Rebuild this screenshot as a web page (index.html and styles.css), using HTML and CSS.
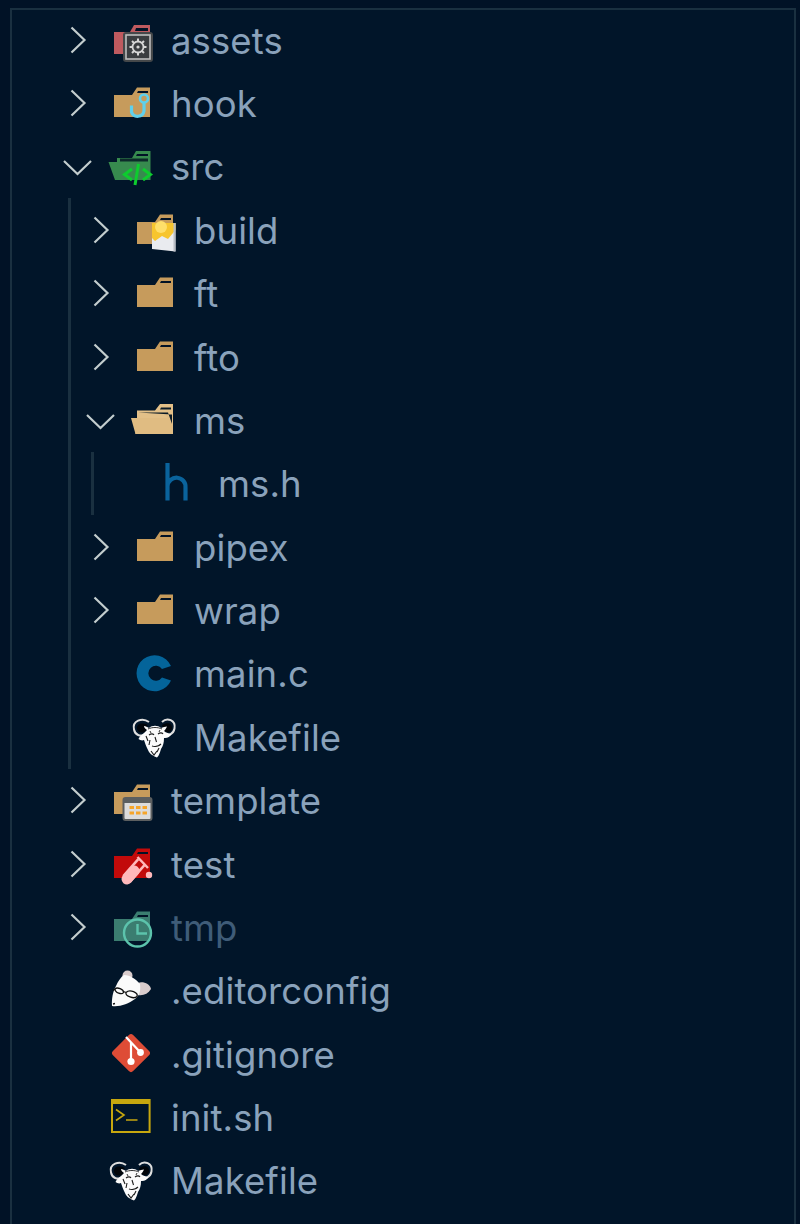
FILE: index.html
```html
<!DOCTYPE html>
<html lang="en">
<head>
<meta charset="utf-8">
<title>Explorer</title>
<link rel="stylesheet" href="styles.css">
</head>
<body>
<svg class="sprite" aria-hidden="true">
  <defs>
    <symbol id="right" viewBox="0 0 30 30"><path d="M8.5 2.5 L21.5 15 L8.5 27.5" class="chev"/></symbol>
    <symbol id="down" viewBox="0 0 30 30"><path d="M1 10 L14.5 23 L28 10" class="chev"/></symbol>
    <symbol id="gnu" viewBox="-6 -4 48 48" overflow="visible">
      <path d="M12 3C5-2-5 2-3 10.500C-2 16 3 18 9 15.500" fill="none" stroke="#dedede" stroke-width="2"/>
      <path d="M25 3C30-2 39 1 37.500 9.500C36.500 15 31 17.500 27 15.500" fill="none" stroke="#dedede" stroke-width="2"/>
      <path d="M10.500 6C5 3-1 5 0 10C1 14 5 14.500 9 12Z" fill="#01050a"/>
      <path d="M25 6C30 3 35.500 4 35 9.500C34 13.500 30 14 27 12Z" fill="#01050a"/>
      <path d="M10 11C8 10 7 8 7 7C9 7 10 8 12 9C15 6 21 6 24 9C26 8 28 8 30 7.500C29 10 28 11 27 12C29 14 32 14 34.500 15C33 18 30 19.500 27 19C27 24 26 27 24 30C23 33 22 37 20 38.500C17 37 13 36 11 31C9 27 8 24 7 21C5 22 3 21 1.500 20C3 16 7 15 10 11Z" fill="#fbfbfb"/>
      <path d="M12 16C14 14.500 16 14.500 17 16M21 15C23 13.500 25 13.500 26 15M15 27C18 28 22 27 24 25M18 18L19.500 23M13 21L12 26M9 17L11 22M14 32L17 36L20 32M22 29L20 33" fill="none" stroke="#1c1c1c" stroke-width="1.100"/>
      <path d="M11 10C15 8 21 8 25 10M13 12L14 14M23 11L22 13" fill="none" stroke="#333" stroke-width="1"/>
    </symbol>
  </defs>
</svg>

<main class="panel">
  <ul class="tree">
    <li class="row"><span class="twist"><svg class="chevron"><use href="#right"/></svg></span>
      <svg class="icon" viewBox="0 0 36 36"><path d="M0 10H13V32H0Z" fill="#bf5a5f"/><path d="M16 10L20 3H36V12H16Z" fill="#bf5a5f"/><path d="M22 6H34V9H21Z" fill="#011226"/>
        <rect x="9" y="10" width="30" height="30" rx="3" fill="#45484a"/><rect x="12" y="13" width="24" height="24" fill="#3a3d40" stroke="#bdbdbd" stroke-width="1.600"/>
        <circle cx="24" cy="25" r="5.500" fill="none" stroke="#d6d6d6" stroke-width="1.800"/><circle cx="24" cy="25" r="1.600" fill="#d6d6d6"/><path d="M24 16.500V19.500M24 30.500V33.500M15.500 25H18.500M29.500 25H32.500M18 19L20 21M28 29L30 31M30 19L28 21M20 29L18 31" stroke="#d6d6d6" stroke-width="2"/></svg>
      <span class="name">assets</span></li>
    <li class="row"><span class="twist"><svg class="chevron"><use href="#right"/></svg></span>
      <svg class="icon" viewBox="0 0 36 36"><path class="folder" d="M0 10H18L23 2.500H36V32H0Z"/><path d="M24 6H34V8H23Z" fill="#011226"/>
        <circle cx="30" cy="13.500" r="4" fill="none" stroke="#5fd0ec" stroke-width="2.600"/><path d="M30 17.500V26A6.500 6.500 0 0 1 17.500 27V20.500" fill="none" stroke="#5fd0ec" stroke-width="3.200"/></svg>
      <span class="name">hook</span></li>
    <li>
      <div class="row"><span class="twist"><svg class="chevron wide"><use href="#down"/></svg></span>
        <svg class="icon" viewBox="0 0 36 36"><path d="M3 14V10H18L22 3H36.500V32H1L-5.500 14Z" fill="#378a4e"/><path d="M23 6H34V8H22Z" fill="#011226"/><path d="M6 10.500H34V13.500H6Z" fill="#0d2a2a"/>
          <path d="M18 21L10.500 26.500L18 32M29 21L36.500 26.500L29 32M24.500 16L21 37" fill="none" stroke="#0dcc2e" stroke-width="3"/></svg>
        <span class="name">src</span></div>
      <ul class="group">
        <li class="row"><span class="twist"><svg class="chevron"><use href="#right"/></svg></span>
          <svg class="icon" viewBox="0 0 36 36"><path class="folder" d="M0 10H18L23 2.500H36V32H0Z"/><path d="M24 6H34V8H23Z" fill="#011226"/>
            <path d="M15 11H38.500V39.500L15 37Z" fill="#e9ebef"/><path d="M15 11H38.500V18L31 27L25 24L18 29L15 26Z" fill="#f7c52e"/><circle cx="24" cy="15" r="6" fill="#ffdf6a"/><path d="M36.500 11H38.500V39.500H36.500Z" fill="#b9bdc4"/></svg>
          <span class="name">build</span></li>
        <li class="row"><span class="twist"><svg class="chevron"><use href="#right"/></svg></span>
          <svg class="icon" viewBox="0 0 36 36"><path class="folder" d="M0 10H18L23 2.500H36V32H0Z"/><path d="M24 6H34V8H23Z" fill="#011226"/></svg>
          <span class="name">ft</span></li>
        <li class="row"><span class="twist"><svg class="chevron"><use href="#right"/></svg></span>
          <svg class="icon" viewBox="0 0 36 36"><path class="folder" d="M0 10H18L23 2.500H36V32H0Z"/><path d="M24 6H34V8H23Z" fill="#011226"/></svg>
          <span class="name">fto</span></li>
        <li>
          <div class="row"><span class="twist"><svg class="chevron wide"><use href="#down"/></svg></span>
            <svg class="icon" viewBox="0 0 36 36"><path fill="#e3c088" d="M0 16V8.500H18L23 2H36V32H-1.500Z"/><path d="M24 5.500H34V7.500H23ZM1 10.500H31L35 22V12.500Z" fill="#0a1a26"/><path d="M-6 16H31L28.500 13H31L35.500 25V32H-1.500Z" fill="#e0bc82"/></svg>
            <span class="name">ms</span></div>
          <ul class="group inner">
            <li class="row"><span class="twist"></span>
              <svg class="icon" viewBox="0 0 36 36"><path d="M6.500-2V35.500M6.500 21A9 9 0 0 1 24.500 22.500V35.500" fill="none" stroke="#0a639c" stroke-width="4.200"/></svg>
              <span class="name">ms.h</span></li>
          </ul>
        </li>
        <li class="row"><span class="twist"><svg class="chevron"><use href="#right"/></svg></span>
          <svg class="icon" viewBox="0 0 36 36"><path class="folder" d="M0 10H18L23 2.500H36V32H0Z"/><path d="M24 6H34V8H23Z" fill="#011226"/></svg>
          <span class="name">pipex</span></li>
        <li class="row"><span class="twist"><svg class="chevron"><use href="#right"/></svg></span>
          <svg class="icon" viewBox="0 0 36 36"><path class="folder" d="M0 10H18L23 2.500H36V32H0Z"/><path d="M24 6H34V8H23Z" fill="#011226"/></svg>
          <span class="name">wrap</span></li>
        <li class="row"><span class="twist"></span>
          <svg class="icon" viewBox="0 0 36 36"><path d="M34 11A18 18 0 1 0 34 25.500L25 22.500A7.500 7.500 0 1 1 25 14Z" fill="#04649a"/></svg>
          <span class="name">main.c</span></li>
        <li class="row"><span class="twist"></span>
          <svg class="icon"><use href="#gnu" x="-6" y="-4" width="48" height="48"/></svg>
          <span class="name">Makefile</span></li>
      </ul>
    </li>
    <li class="row"><span class="twist"><svg class="chevron"><use href="#right"/></svg></span>
      <svg class="icon" viewBox="0 0 36 36"><path class="folder" d="M0 10H18L23 2.500H36V32H0Z"/><path d="M24 6H34V8H23Z" fill="#011226"/>
        <rect x="9.500" y="16" width="28" height="22" rx="2" fill="#dcdcdc" stroke="#5c5f60" stroke-width="2"/><path d="M9 16H38V21H9Z" fill="#5c5f60"/>
        <path d="M15.500 24H20V27H15.500ZM22 24H26.500V27H22ZM28.500 24H33V27H28.500ZM15.500 29.500H20V32.500H15.500ZM22 29.500H26.500V32.500H22ZM28.500 29.500H33V32.500H28.500Z" fill="#f6a52a"/></svg>
      <span class="name">template</span></li>
    <li class="row"><span class="twist"><svg class="chevron"><use href="#right"/></svg></span>
      <svg class="icon" viewBox="0 0 36 36"><path d="M0 10H18L23 2.500H36V32H0Z" fill="#c20a0a"/><path d="M24 6H34V8H23Z" fill="#011226"/>
        <path d="M12.500 33L27.500 16" stroke="#ffb9bb" stroke-width="11"/><path d="M20 24.500L27.500 16" stroke="#c20a0a" stroke-width="6"/><path d="M13 33L20 25" stroke="#ffb9bb" stroke-width="11" stroke-linecap="round"/><path d="M23.500 11L34 22" stroke="#ffb9bb" stroke-width="2.500"/><circle cx="35" cy="29" r="3.200" fill="#ffb9bb"/></svg>
      <span class="name">test</span></li>
    <li class="row"><span class="twist"><svg class="chevron"><use href="#right"/></svg></span>
      <svg class="icon" viewBox="0 0 36 36"><path d="M0 10H18L23 2.500H36V32H0Z" fill="#3b7d70"/><path d="M24 6H34V8H23Z" fill="#011226"/>
        <circle cx="23.500" cy="24" r="13.500" fill="none" stroke="#5cc3ac" stroke-width="2.400"/><path d="M23.500 15V24.500H33" fill="none" stroke="#5cc3ac" stroke-width="2.400"/></svg>
      <span class="name dim">tmp</span></li>
    <li class="row"><span class="twist"></span>
      <svg class="icon" viewBox="0 0 36 36"><ellipse cx="13.500" cy="3.500" rx="5" ry="5" fill="#d9cccc"/><path d="M24 11C29 9 36 12 37 17C34 22 29 24 24 23Z" fill="#d9cccc"/>
        <path d="M-2 34C-2.500 27-1 19 2 14C4 9 7 5 10 3C16 3 22 7 26 12C27 20 25 24 21 27C14 32 6 35-2 34Z" fill="#fafafa"/>
        <path d="M-1 18.500L1 17M12 20.500C11 24 20 27.500 23 24.500C24.500 21 16 16.500 12 20.500ZM1 17C1 21 8 23 9.500 20.500C10 17.500 3 14.500 1 17ZM9.500 19.500L12 20.500M-1 32L1 31.500" fill="none" stroke="#111" stroke-width="1.300"/></svg>
      <span class="name">.editorconfig</span></li>
    <li class="row"><span class="twist"></span>
      <svg class="icon" viewBox="0 0 36 36"><rect x="2.800" y="2.800" width="28.500" height="28.500" rx="3" transform="rotate(45 17 17)" fill="#de4c36"/>
        <path d="M12 1L26.500 16.500M17 6.500V25" stroke="#fff" stroke-width="2.200" fill="none"/><circle cx="26.500" cy="16.500" r="3.400" fill="#fff"/><circle cx="17" cy="25.500" r="3.600" fill="#fff"/></svg>
      <span class="name">.gitignore</span></li>
    <li class="row"><span class="twist"></span>
      <svg class="icon" viewBox="0 0 36 36"><rect x="-2" y="1" width="37.600" height="32" fill="none" stroke="#c7a70e" stroke-width="2"/><path d="M-2 1H35.600V5H-2Z" fill="#c7a70e"/>
        <path d="M2 10.500L10 16L2 21.500M12 21H23.500" fill="none" stroke="#c7a70e" stroke-width="1.600"/></svg>
      <span class="name">init.sh</span></li>
    <li class="row"><span class="twist"></span>
      <svg class="icon"><use href="#gnu" x="-6" y="-4" width="48" height="48"/></svg>
      <span class="name">Makefile</span></li>
  </ul>
</main>
</body>
</html>
```

FILE: styles.css
```css
* {
  box-sizing: border-box;
}

html,
body {
  margin: 0;
  height: 100%;
  overflow: hidden;
  background: #011226;
}

.sprite {
  position: absolute;
  width: 0;
  height: 0;
}

.panel {
  margin: 8px 4px 0 10px;
  height: 1216px;
  box-shadow: inset 2px 0 0 #1a3040, inset -2px 0 0 #1a3040, inset 0 2px 0 #1a3040;
  background: #011529;
}

ul {
  list-style: none;
  margin: 0;
  padding: 0;
}

.tree {
  padding-left: 53px;
  font-family: Inter, "Liberation Sans", sans-serif;
  font-size: 36.5px;
  letter-spacing: 0.1px;
  color: #8aa2bb;
}

.row {
  display: flex;
  align-items: center;
  height: 63.39px;
}

.twist {
  flex: none;
  display: flex;
  align-items: center;
  width: 51px;
}

.chevron {
  width: 30px;
  height: 30px;
  overflow: visible;
}

.chev {
  fill: none;
  stroke: #c3cdce;
  stroke-width: 2.2;
}

.icon {
  flex: none;
  width: 36px;
  height: 36px;
  margin-right: 21px;
  overflow: visible;
}

.folder {
  fill: #c69b5c;
}

.name {
  margin-top: 2px;
  white-space: nowrap;
}

.dim {
  color: #3f5c78;
}

.group {
  margin-left: 5px;
  padding-left: 15px;
  border-left: 3px solid #1a3040;
}

.inner {
  border-left-color: #1a3040;
  padding-left: 16px;
}
```
